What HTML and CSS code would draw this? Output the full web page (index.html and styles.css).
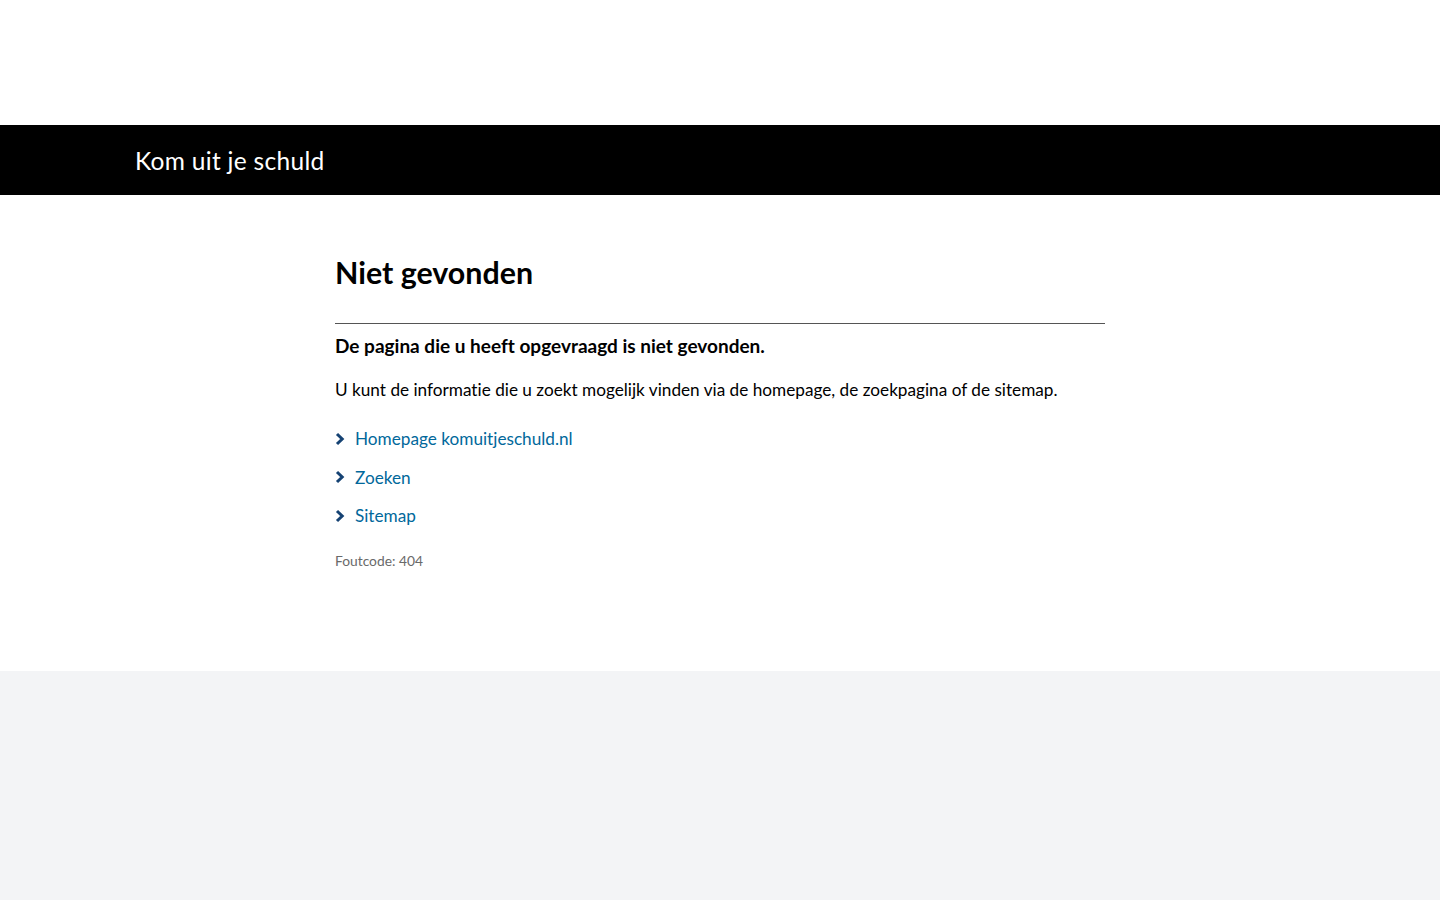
FILE: index.html
```html
<!DOCTYPE html>
<html lang="nl">
<head>
<meta charset="utf-8">
<title>Niet gevonden | Kom uit je schuld</title>
<link rel="stylesheet" href="styles.css">
</head>
<body>
<div class="page">
  <div class="top"></div>
  <header class="bar">
    <div class="bar-inner">
      <a class="site-name" href="#">Kom uit je schuld</a>
    </div>
  </header>
  <main class="main">
    <div class="content">
      <h1 class="title">Niet gevonden</h1>
      <hr class="rule">
      <p class="lead">De pagina die u heeft opgevraagd is niet gevonden.</p>
      <p class="text">U kunt de informatie die u zoekt mogelijk vinden via de homepage, de zoekpagina of de sitemap.</p>
      <ul class="links">
        <li><a href="#"><svg class="chev" viewBox="0 0 10 14" width="10" height="14"><path d="M2 2 L7.2 7 L2 12" fill="none" stroke="#154273" stroke-width="3" stroke-linejoin="miter"/></svg><span>Homepage komuitjeschuld.nl</span></a></li>
        <li><a href="#"><svg class="chev" viewBox="0 0 10 14" width="10" height="14"><path d="M2 2 L7.2 7 L2 12" fill="none" stroke="#154273" stroke-width="3" stroke-linejoin="miter"/></svg><span>Zoeken</span></a></li>
        <li><a href="#"><svg class="chev" viewBox="0 0 10 14" width="10" height="14"><path d="M2 2 L7.2 7 L2 12" fill="none" stroke="#154273" stroke-width="3" stroke-linejoin="miter"/></svg><span>Sitemap</span></a></li>
      </ul>
      <p class="code">Foutcode: 404</p>
    </div>
  </main>
  <footer class="footer"></footer>
</div>
</body>
</html>
```
FILE: styles.css
```css
* { box-sizing: border-box; }
html, body { margin: 0; padding: 0; }
body {
  font-family: Lato, "Open Sans", sans-serif;
  font-variant-ligatures: none;
  color: #000;
  background: #fff;
}
.page { min-height: 900px; display: flex; flex-direction: column; }
.top { height: 125px; }
.bar { background: #000; height: 70px; }
.bar-inner { padding: 0 0 0 135px; height: 70px; display: flex; align-items: center; }
.site-name {
  color: #fff; text-decoration: none; font-size: 24.5px; letter-spacing: 0.3px;
}
.main { padding: 55px 0 100px; }
.content { width: 770px; margin-left: 335px; }
.title { font-size: 30.4px; font-weight: 700; margin: 0; line-height: 44px; }
.rule { border: 0; border-top: 1px solid #555; margin: 29px 0 0; }
.lead { font-size: 19px; font-weight: 700; margin: 9px 0 0; line-height: 26px; }
.text { font-size: 17.2px; margin: 18px 0 0; line-height: 26px; }
.links { list-style: none; margin: 23px 0 0; padding: 0; }
.links li { line-height: 26px; margin-bottom: 12px; }
.links a { color: #01689b; text-decoration: none; font-size: 17.2px; display: inline-flex; align-items: center; }
.chev { margin-right: 10px; margin-top: -1px; }
.code { font-size: 13.8px; color: #696969; margin: 21px 0 0; line-height: 20px; }
.footer { flex: 1; background: #f3f4f6; }
```
